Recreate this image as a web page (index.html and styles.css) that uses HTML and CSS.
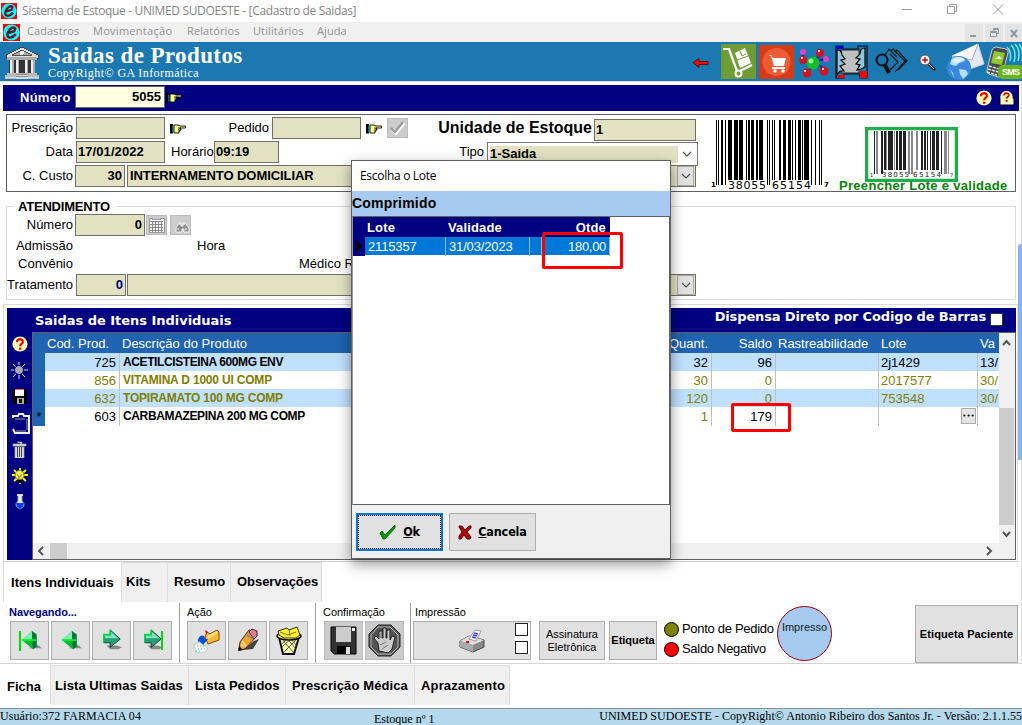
FILE: index.html
```html
<!DOCTYPE html>
<html lang="pt-BR">
<head>
<meta charset="utf-8">
<title>Sistema de Estoque</title>
<link rel="stylesheet" href="styles.css">
</head>
<body>
<svg class="defs" width="0" height="0">
  <defs>
    <symbol id="app" viewBox="0 0 16 16"><rect width="16" height="16" fill="#f00"/><circle cx="8" cy="8" r="7.6" fill="#0ff"/><path d="M4.500 8.700L10.500 6.800C13 3.200 9.500 2 6.500 5C3.200 8.500 3.500 13 7 12.800C9 12.600 10.500 11.500 12 9.500" fill="none" stroke="#601828" stroke-width="2.300"/></symbol>
    <symbol id="hand" viewBox="0 0 16 10"><path d="M0 0h3v9.500H0z" fill="#000"/><path d="M2.500 1.500h1v7h-1z" fill="#0cc"/><path d="M4 1h4l2 1h5.500v2h-5.500v1h1v1h-1v1h-1v2H4z" fill="#ffff90" stroke="#000" stroke-width=".9"/><path d="M8 4h3M8 6h2" stroke="#000" stroke-width=".8"/></symbol>
    <symbol id="help" viewBox="0 0 16 16"><circle cx="8" cy="8" r="7.600" fill="#ffffb8"/><path d="M5 6.200C5 2.200 11 2.400 10.800 5.800C10.600 8 8.200 7.800 8.100 10.200" fill="none" stroke="#e00" stroke-width="2.200"/><rect x="7" y="11.600" width="2.400" height="2.200" fill="#e00"/></symbol>
    <symbol id="chev" viewBox="0 0 10 6"><path d="M1 1l4 4 4-4" fill="none" stroke="#505050" stroke-width="1.200"/></symbol>
    <symbol id="arrow" viewBox="0 0 24 24"><path d="M6 18h11l6 2-4 2H10z" fill="#888"/><path d="M3 6h7V1l11 10-11 9v-5H3z" fill="#2a9d76" stroke="#0a3b34"/><path d="M4 7h7V3l8 7H4z" fill="#7ce6bd"/><path d="M3 15V6h7V1" fill="none" stroke="#0d4" stroke-width="1.500"/></symbol>
    <symbol id="diamond" viewBox="0 0 24 24"><path d="M8 20h15l-5-4z" fill="#888"/><path d="M1 11L12 1l5 4v13l-4 3z" fill="#08b830"/><path d="M1 11L12 1v10z" fill="#7ff0b0"/><path d="M12 1l5 4v13l-4 3z" fill="#087040"/><path d="M1 11h16" stroke="#0e2" stroke-width="2"/></symbol>
  </defs>
</svg>
<div class="window">
  <header class="titlebar">
    <svg class="app-icon" width="16" height="16"><use href="#app"/></svg>
    <span class="title-text">Sistema de Estoque - UNIMED SUDOESTE - [Cadastro de Saidas]</span>
    <svg class="win-controls" width="110" height="22" fill="none" stroke="#999"><path d="M0 9.500h10M45.500 6.500h7v7h-7zM47.500 6.500v-2h7v7h-2M91 4.500l10 10M101 4.500l-10 10"/></svg>
  </header>
  <nav class="menubar">
    <svg class="app-icon" width="17" height="17"><use href="#app"/></svg>
    <span class="menu m1">Cadastros</span><span class="menu m2">Movimentação</span><span class="menu m3">Relatórios</span><span class="menu m4">Utilitários</span><span class="menu m5">Ajuda</span>
    <div class="mdi">
      <span><svg width="18" height="18"><path d="M5 12h6" stroke="#8c99a3" stroke-width="2"/></svg></span>
      <span><svg width="18" height="18" fill="none" stroke="#8c99a3"><path d="M5.500 8.500h6v4h-6zM5 7.500h7M8.500 7v-2.500h5v5h-2M8 5.500h6"/></svg></span>
      <span><svg width="17" height="18"><path d="M6 6l6 7M12 6l-6 7" stroke="#8c99a3" stroke-width="2"/></svg></span>
    </div>
  </nav>

  <section class="banner">
    <svg class="bank" width="34" height="34" viewBox="0 0 34 34" shape-rendering="crispEdges"><path d="M1 9L17 1l16 8v3H1z" fill="#ddd" stroke="#444"/><path d="M7 9l10-5 10 5z" fill="#aaa" stroke="#555"/><circle cx="17" cy="7" r="2" fill="#eee"/><path d="M2 11h30v3H2z" fill="#aaa"/><path d="M4 14h26v14H4z" fill="#343434"/><path d="M5 14h4v13H5zM11 14h3v13h-3zM20 14h3v13h-3zM26 14h4v13h-4z" fill="#eee"/><path d="M7 14h2v13H7zM13 14h1v13h-1zM22 14h1v13h-1zM28 14h2v13h-2z" fill="#aaa"/><path d="M2 27h30v2h2v4H0v-4h2z" fill="#bbb"/><path d="M11 28h12v5H11z" fill="#888"/><path d="M0 31h34M11 29h12M11 32h12" stroke="#ddd"/></svg>
    <div class="banner-text"><h1>Saidas de Produtos</h1><p>CopyRight© GA Informática</p></div>
    <svg class="tools" width="330" height="39" viewBox="0 0 330 39">
      <path d="M1 20.500l6-4v3h9v3H7v3z" fill="#f00" stroke="#500" stroke-width=".8"/>
      <rect x="29" y="2" width="35" height="35" fill="#6f9d35"/><path d="M31 7h6l8 22" fill="none" stroke="#fff" stroke-width="2.200"/><path d="M43 11l10-5 6 15-11 5z" fill="#fff"/><path d="M48 9l2 5 4-2M45 18l11-4" fill="none" stroke="#6f9d35"/><circle cx="46.500" cy="31.500" r="3" fill="none" stroke="#fff" stroke-width="2"/><path d="M48 29l12-6" stroke="#fff" stroke-width="2"/>
      <rect x="67" y="3" width="35" height="34" rx="2" fill="#d53c16"/><circle cx="84.500" cy="20" r="14" fill="#ed5b35"/><path d="M76 13h3l2 3h13l-2 8H82l-3-10zM80 25h13v2H80z" fill="#fff"/><circle cx="83" cy="29" r="1.700" fill="#fff"/><circle cx="91" cy="29" r="1.700" fill="#fff"/>
      <path d="M111 10v8l10 4 8-11M115 31l8-10 13 8M121 20l16-4" fill="none" stroke="#0b2ba0" stroke-width="2.500"/><circle cx="121" cy="21" r="6.500" fill="#12bd2b"/><circle cx="119" cy="19" r="2.500" fill="#8f8"/><circle cx="111" cy="10" r="3" fill="#d4c"/><circle cx="134" cy="17" r="3" fill="#d4c"/><g fill="#d01525"><circle cx="128" cy="11" r="4"/><circle cx="111" cy="18" r="4"/><circle cx="115" cy="31" r="4.500"/><circle cx="132" cy="29" r="4.500"/></g><path d="M126 9h2M109 16h2M112 29h2M130 27h2" stroke="#fcc" stroke-width="2"/>
      <rect x="149" y="8" width="18" height="23" fill="#c0c0c0" stroke="#222"/><path d="M144 4h7v3h15V4h9v32h-7v-4h-16v4h-8z" fill="none" stroke="#111" stroke-width="1.200"/><path d="M144 4h7v3h-7z" fill="#00d"/><path d="M146 33h7v3h-7zM168 29h7v7h-7z" fill="#f00"/><path d="M145 8q4-1 5 5l3 4-4 1 4 4-5 2 4 5-4 0-3 4zM173 6q-5 0-5 6l-4 4 4 1-4 5 4 1-3 5 4-1 4-2z" fill="#8fc5df" stroke="#000" stroke-width="1.200"/>
      <g fill="none" stroke="#111" stroke-width="1.100"><path d="M193 13l4-6 8 8M199 9l2-2 12 12-10 11M203 10l2-2 9 10-10 11M198 12l8 8-8 8M207 10l8 9-9 9"/><circle cx="190" cy="18" r="5.500" stroke-width="2"/><path d="M193 23l4 8" stroke-width="4"/></g>
      <circle cx="233" cy="18" r="5" fill="#fff" stroke="#555"/><path d="M233 15v6M230 18h6" stroke="#d00" stroke-width="1.500"/><path d="M237 22l6 6" stroke="#111" stroke-width="2.500"/><path d="M237 22l5 5" stroke="#ddd"/>
      <path d="M260 14L286 2l6 20-23 8z" fill="#e5e9f4" stroke="#ccd"/><path d="M260 14l20 4 6-16" fill="#f8f8fc" stroke="#aab"/><circle cx="267" cy="26" r="12" fill="#3889df"/><path d="M258 22c2-8 12-9 15-4l-5 2-4 4-4-1zM267 27l7 1 2 4-5 5-3-5zM258 27l3 4 1 5" fill="#b5e1fa"/><ellipse cx="266" cy="18" rx="7" ry="3" fill="#fff" opacity=".5"/>
      <path d="M300 8q1-3 4-3l10 2q3 1 2 4l-6 22q-1 3-4 2l-9-3q-3-1-2-4z" fill="#464c53" stroke="#ccc"/><path d="M302 9l11 2-3 12-11-2z" fill="#8fc92e"/><path d="M303 17l4-3 3 3z" fill="#fff"/><path d="M297 24l10 3M296 27l10 3M295 30l10 3" stroke="#eee" stroke-width="1.500" stroke-dasharray="3 1"/><path d="M315 5q5 5 3 14M319 3q6 6 3 17M323 2q6 6 3 17M327 2q5 6 3 17" fill="none" stroke="#5df1ed" stroke-width="1.500"/><rect x="306" y="23" width="26" height="14" rx="5" fill="#69b51e"/>
      <text x="310" y="33" class="sms" textLength="18">SMS</text>
    </svg>
  </section>

  <main class="content">
    <section class="number-bar">
      <label>Número</label><div class="number-input">5055</div>
      <svg width="16" height="10"><use href="#hand"/></svg>
      <svg class="help-a" width="16" height="16"><use href="#help"/></svg>
      <svg class="help-b" width="16" height="16"><path d="M1 8h14v7H1z" fill="#ffffd0" stroke="#000"/><use href="#help" x="1" width="13" height="14"/></svg>
    </section>

    <section class="request">
      <div class="fields">
        <div class="row">
          <label class="lead">Prescrição</label><div class="box w89"></div>
          <svg class="hand" width="16" height="10"><use href="#hand"/></svg>
          <label class="pedido">Pedido</label><div class="box w89"></div>
          <svg class="hand" width="16" height="10"><use href="#hand"/></svg>
          <div class="sq confirm"><svg width="19" height="18"><path d="M4 10l4 4 8-10" fill="none" stroke="#fff" stroke-width="3.500"/><path d="M3 9l4 4 8-10" fill="none" stroke="#999" stroke-width="2.500"/></svg></div>
          <label class="unit">Unidade de Estoque</label><div class="box w102">1</div>
        </div>
        <div class="row">
          <label class="lead">Data</label><div class="box w89">17/01/2022</div>
          <label class="hour">Horário</label><div class="box w65">09:19</div>
          <label class="type">Tipo</label><div class="select"><span>1-Saida</span><svg width="10" height="6"><use href="#chev"/></svg></div>
        </div>
        <div class="row shift">
          <label class="lead">C. Custo</label><div class="box w50 num">30</div>
          <div class="box wide">INTERNAMENTO DOMICILIAR<i class="drop"><svg width="10" height="6"><use href="#chev"/></svg></i></div>
        </div>
      </div>
      <svg class="barcode" width="118" height="71" viewBox="0 0 118 71" shape-rendering="crispEdges">
        <path d="M5 0h1v65h-1zM7 0h1v65h-1zM10 0h2v65h-2zM14 0h1v65h-1zM17 0h4v60h-4zM23 0h4v60h-4zM28 0h4v60h-4zM35 0h1v60h-1zM37 0h2v60h-2zM40 0h3v60h-3zM45 0h2v60h-2zM48 0h4v60h-4zM56 0h1v65h-1zM58 0h1v65h-1zM61 0h1v60h-1zM63 0h1v60h-1zM68 0h2v60h-2zM72 0h3v60h-3zM77 0h3v60h-3zM81 0h1v60h-1zM84 0h1v60h-1zM87 0h3v60h-3zM91 0h1v60h-1zM93 0h5v60h-5zM100 0h1v65h-1zM104 0h1v65h-1zM108 0h1v65h-1zM110 0h1v65h-1z"/>
        <text x="0" y="67" class="bar-side">1</text><text x="17" y="69" class="bar-num" textLength="38">38055</text><text x="61" y="69" class="bar-num" textLength="39">65154</text><text x="113" y="67" class="bar-side">7</text>
      </svg>
      <div class="mini">
        <svg class="mini-code" width="93" height="55" viewBox="0 0 93 55">
          <rect x="1.500" y="1.500" width="90" height="52" fill="#fff" stroke="#21ad4c" stroke-width="3.500"/>
          <path d="M9 4h1v43h-1zM16 4h2v43h-2zM19 4h2v39h-2zM23 4h5v39h-5zM31 4h2v39h-2zM34 4h3v39h-3zM38 4h3v39h-3zM56 4h2v39h-2zM59 4h2v39h-2zM62 4h1v39h-1zM65 4h1v39h-1zM67 4h3v39h-3zM71 4h3v39h-3zM76 4h1v43h-1z" fill="#222"/><path d="M11 4h2v43h-2zM21 4h1v39h-1zM29 4h1v39h-1zM43 4h2v43h-2zM46 4h2v43h-2zM51 4h2v39h-2zM79 4h3v43h-3zM83 4h1v43h-1z" fill="#888"/>
          <text x="5" y="50" class="mini-side">1</text><text x="17" y="50" class="mini-num" textLength="27">38055</text><text x="48" y="50" class="mini-num" textLength="28">65154</text><text x="85" y="50" class="mini-side">7</text>
        </svg>
        <p>Preencher Lote e validade</p>
      </div>
    </section>

    <section class="care">
      <h2>ATENDIMENTO</h2>
      <div class="row c1 shift"><label class="lead">Número</label><div class="box w70 num">0</div>
        <div class="sq"><svg width="19" height="18" shape-rendering="crispEdges"><path d="M2 2h3v1h8v-1h4v14H2z" fill="#fff" stroke="#999"/><path d="M3 5.500h13M3 8.500h13M3 11.500h13M3 14h13M5.500 5v11M8.500 5v11M11.500 5v11M14.500 5v11" stroke="#888"/></svg></div>
        <div class="sq second"><svg width="19" height="18"><path d="M5 16v-4l3-5h2v3h2v-3h2l4 5v4h-5v-3h-2v3z" fill="#909090" stroke="#fff" stroke-width=".8"/><path d="M8 8h2M12 8h2M6 13h2M14 13h2" stroke="#fff"/></svg></div></div>
      <div class="row c2"><label class="lead">Admissão</label><label class="hora">Hora</label></div>
      <div class="row c3"><label class="lead">Convênio</label><label class="medico">Médico Responsável</label></div>
      <div class="row c4"><label class="lead">Tratamento</label><div class="box w50 num navy">0</div><div class="box wide"><i class="drop"><svg width="10" height="6"><use href="#chev"/></svg></i></div></div>
    </section>

    <section class="items">
      <div class="items-panel">
        <div class="items-head"><h3>Saidas de Itens Individuais</h3><span>Dispensa Direto por Codigo de Barras</span><i class="check"></i></div>
        <div class="items-body">
          <div class="side-tools">
            <svg width="16" height="16"><use href="#help"/></svg>
            <svg width="17" height="17"><path d="M8 0v17M0 8h17M2 2l12 13M14 2L2 15" stroke="#ddd"/><circle cx="8" cy="8" r="4.500" fill="#aaa" stroke="#000080"/></svg>
            <svg width="15" height="15" shape-rendering="crispEdges"><path d="M0 0h15v15H2L0 13z"/><path d="M3 0h9v7H3z" fill="#fff"/><path d="M3 0h9v1H3z" fill="#f55"/><path d="M5 9h7v6H5z" fill="#aaa"/><path d="M7 10h3v4H7z" fill="#111"/></svg>
            <svg class="clip" width="19" height="23" fill="none"><path d="M1 6V4h5l1-2h4l1 2h5v17H3l-2-4" stroke="#eee" stroke-width="2"/><path d="M3 7h10M4 19h10M15 7v11" stroke="#999"/></svg>
            <svg width="15" height="17"><path d="M1 3h13v2H1zM5 1h5v2M3 6h9v11H3z" fill="#ddd" stroke="#aaa" stroke-width=".7"/><path d="M5.500 6v10M7.500 6v10M9.500 6v10" stroke="#444"/></svg>
            <svg width="16" height="16"><path d="M8 0v16M0 7h16M2 2l12 11M14 2L2 13" stroke="#ff0" stroke-width="1.800"/><circle cx="7.500" cy="7" r="4.500" fill="#ff5" stroke="#870"/><path d="M5 6l2 3h1l2-3M7 9v4" fill="none" stroke="#863"/><path d="M6 12h4v3H6z" fill="#000"/></svg>
            <svg width="12" height="16"><path d="M4 1v6q-5 5 2 8 7-3 2-8V1z" fill="#e8eeee" stroke="#999"/><path d="M3 1h6" stroke="#ddd" stroke-width="2"/><path d="M2 9h8l-1 4-3 2-3-2z" fill="#0742f8"/></svg>
          </div>
          <div class="grid-wrap">
            <div class="grid-view">
              <div class="data">
                <div class="gr gh"><b></b><span>Cod. Prod.</span><span>Descrição do Produto</span><span class="r">Quant.</span><span class="r">Saldo</span><span>Rastreabilidade</span><span>Lote</span><span>Va</span></div>
                <div class="gr alt"><b></b><span class="r">725</span><span class="prod">ACETILCISTEINA 600MG ENV</span><span class="r">32</span><span class="r">96</span><span></span><span>2j1429</span><span>13/</span></div>
                <div class="gr olive"><b></b><span class="r">856</span><span class="prod p2">VITAMINA D 1000 UI COMP</span><span class="r">30</span><span class="r">0</span><span></span><span>2017577</span><span>30/</span></div>
                <div class="gr alt olive"><b></b><span class="r">632</span><span class="prod p3">TOPIRAMATO 100 MG COMP</span><span class="r">120</span><span class="r">0</span><span></span><span>753548</span><span>30/</span></div>
                <div class="gr"><b>*</b><span class="r">603</span><span class="prod p4">CARBAMAZEPINA 200 MG COMP</span><span class="r oliv">1</span><span class="r">179</span><span></span><span class="lot"><em>•••</em></span><span></span></div>
              </div>
              <div class="vscroll"><svg width="15" height="75"><path d="M4 12l3.500-4 3.500 4" fill="none" stroke="#555" stroke-width="2"/></svg><i></i><svg width="15" height="18"><path d="M4 7l3.500 4L11 7" fill="none" stroke="#555" stroke-width="2"/></svg></div>
            </div>
            <div class="hscroll"><svg width="17" height="16"><path d="M10 4L6 8l4 4" fill="none" stroke="#555" stroke-width="2"/></svg><i></i><svg class="right" width="17" height="16"><path d="M5 4l4 4-4 4" fill="none" stroke="#555" stroke-width="2"/></svg></div>
          </div>
        </div>
      </div>
    </section>
    <div class="tabs upper"><span class="active t1">Itens Individuais</span><span class="t2">Kits</span><span class="t3">Resumo</span><span class="t4">Observações</span></div>

    <section class="toolbar">
      <div class="group g1"><h4 class="nav-title">Navegando...</h4><div class="buttons">
        <button><svg width="26" height="24"><path d="M3 2v20" stroke="#0d0" stroke-width="2"/><use href="#diamond" x="4" y="1" width="22" height="22"/></svg></button>
        <button><svg width="24" height="24"><use href="#diamond" x="2" y="1" width="22" height="22"/></svg></button>
        <button><svg width="24" height="24"><use href="#arrow" x="1" y="0" width="22" height="22"/></svg></button>
        <button><svg width="24" height="24"><use href="#arrow" x="1" y="0" width="22" height="22"/><path d="M21 2v19" stroke="#0d0" stroke-width="2"/></svg></button>
      </div></div>
      <div class="group g2"><h4>Ação</h4><div class="buttons">
        <button><svg width="28" height="28"><path d="M12 10l2-5 3 2 7-4 2 2v8l-11 4z" fill="#ffb637" stroke="#864400"/><path d="M14 9l10-5v3l-9 5z" fill="#ffe67a"/><path d="M5 16c-1-8 7-10 7-4h3l-5 6-4-4z" fill="#0751d8"/><path d="M1 18l5-3 9 6-3 4-9 1z" fill="#fff" stroke="#bcc"/><path d="M4 19h8M5 22h8M3 24h6" stroke="#1bc6d8" stroke-dasharray="1 2"/><path d="M12 3l3 2-2 2" fill="#d00"/></svg></button>
        <button><svg width="28" height="28"><path d="M9 23l10-1 6-10-5 2z" fill="#444"/><path d="M5 23l1-8L15 3l6 1 2 5-12 13z" fill="#f7a12c" stroke="#422"/><path d="M15 5l3-3 5 2v5l-3 3z" fill="#e37d95" stroke="#422"/><path d="M13 8l6 4" stroke="#888" stroke-width="2"/><path d="M8 14l4 5M7 17l3 3" stroke="#fff5a0" stroke-width="1.500"/><path d="M4 24l1-5 4 4z" fill="#111"/></svg></button>
        <button><svg width="28" height="31"><path d="M4 12l4 17h11l5-17z" fill="#ffffb0" stroke="#111" stroke-width="2"/><path d="M5 12l14 16M10 11l11 13M24 12L8 28M19 11L7 22M14 12l8 9M14 12l-8 8" stroke="#333" stroke-width=".8"/><ellipse cx="14" cy="11" rx="12" ry="4" fill="#ff9" stroke="#111" stroke-width="1.500"/><path d="M4 10L3 6l9-3 2 2 8-3 3 8-4 3H9z" fill="#ffef29" stroke="#333"/><path d="M14 5l1 6M5 7l8 3 8-3" fill="none" stroke="#773"/></svg></button>
      </div></div>
      <div class="group g3"><h4>Confirmação</h4><div class="buttons">
        <button><svg width="27" height="29"><path d="M1 1h25v27H4l-3-3z" fill="#333" stroke="#000"/><path d="M6 1h15v15H6z" fill="#ccc"/><path d="M7 20h14v8H7z" fill="#000"/><path d="M16 21h4v7h-4z" fill="#ddd"/><path d="M22 2h3v3h-3z" fill="#eee"/></svg></button>
        <button><svg width="33" height="33"><path d="M10 1h13l9 9v13l-9 9H10l-9-9V10z" fill="#555" stroke="#222"/><path d="M10 3h12l8 8v12l-7 7H10l-7-7V11z" fill="none" stroke="#bbb"/><path d="M11 27l-1-8-4-5 2-2 3 3V7h3v7h1V4h3v10h1V6h3v10l2-4 3 1-3 12-4 4z" fill="#ccc" stroke="#222"/><path d="M12 21l6-3M14 25l6-4M12 9v5" stroke="#777"/></svg></button>
      </div></div>
      <div class="group g4"><h4>Impressão</h4><button class="print"><svg width="27" height="25"><path d="M1 13l9-5 15 4v7l-11 5L1 19z" fill="#888" stroke="#444"/><path d="M1 13l9-5 15 4-11 5z" fill="#ddd"/><path d="M1 13v6l13 5v-7z" fill="#aaa"/><path d="M10 11l6-9 6 1-5 10z" fill="#fff" stroke="#999"/><path d="M14 7l4 1M15 5l4 1M13 9l4 1" stroke="#33f" stroke-width="1.500"/><path d="M7 14h3" stroke="#e00" stroke-width="2"/></svg><i class="boxes"><i></i><i></i></i></button></div>
      <button class="sign">Assinatura<br>Eletrônica</button>
      <button class="label">Etiqueta</button>
      <div class="legend"><p><i class="dot"></i>Ponto de Pedido</p><p class="neg"><i class="dot red"></i>Saldo Negativo</p></div>
      <div class="printed">Impresso</div>
      <button class="patient">Etiqueta Paciente</button>
    </section>
  </main>
  <div class="tabs lower"><span class="active b1">Ficha</span><span class="b2">Lista Ultimas Saidas</span><span class="b3">Lista Pedidos</span><span class="b4">Prescrição Médica</span><span class="b5">Aprazamento</span></div>
  <footer class="status"><span class="user">Usuário:372 FARMACIA 04</span><span class="stock">Estoque nº 1</span><span class="version">UNIMED SUDOESTE - CopyRight© Antonio Ribeiro dos Santos Jr. - Versão: 2.1.1.55</span></footer>

  <i class="edge"></i>
  <i class="mark balance"></i>
  <section class="dialog">
    <div class="dialog-title">Escolha o Lote</div>
    <div class="dialog-sub">Comprimido</div>
    <div class="lots">
      <div class="lr lh"><b></b><span>Lote</span><span>Validade</span><span></span><span class="r">Qtde</span></div>
      <div class="lr ld"><b><svg width="8" height="12"><path d="M1 0l6 6-6 6z"/></svg></b><span>2115357</span><span>31/03/2023</span><span></span><span class="r">180,00</span></div>
    </div>
    <div class="actions">
      <button class="ok"><svg width="18" height="16"><path d="M1 9l2-2 3 4L16 1v3L6 15H4z" fill="#00a000" stroke="#004800" stroke-width=".8"/></svg><span><u>O</u>k</span></button>
      <button class="cancel"><svg width="14" height="15"><path d="M1 1h3l3 4 4-4h2v2L9 7l4 5-1 2h-3l-3-4-3 4H1v-3l3-4-3-5z" fill="#a50b0b" stroke="#700"/></svg><span><u>C</u>ancela</span></button>
    </div>
  </section>
  <i class="mark quantity"></i>
</div>
</body>
</html>
```
FILE: styles.css
```css
* { box-sizing: border-box; }
body { margin: 0; font: 13px/15px "Liberation Sans", Arial, sans-serif; color: #000; background: #fff; }
h1, h2, h3, h4, p { margin: 0; }
i { font-style: normal; }
svg { display: block; flex: none; }
button { font: inherit; color: #000; padding: 0; margin: 0; background: #e1e1e1; border: 1px solid #adadad; display: flex; align-items: center; justify-content: center; flex: none; }
.defs { position: absolute; }
.window { position: relative; width: 1022px; height: 725px; overflow: hidden; display: flex; flex-direction: column; white-space: nowrap; }

.titlebar { height: 22px; display: flex; align-items: center; padding-left: 1px; color: #858585; font: 12px/20px "Open Sans", sans-serif; flex: none; }
.title-text { margin-left: 5px; letter-spacing: -.35px; }
.win-controls { margin-left: auto; margin-right: 10px; }
.menubar { height: 20px; background: #f0f0f0; display: flex; align-items: center; padding-left: 3px; color: #909090; font: 11px/16px "Open Sans", sans-serif; flex: none; }
.menu { letter-spacing: .1px; flex: none; padding-bottom: 2px; }
.m1 { width: 66px; margin-left: 7px; }
.m2 { width: 94px; }
.m3 { width: 66px; }
.m4 { width: 64px; }
.m2 { letter-spacing: .28px; }
.mdi { margin-left: auto; display: flex; gap: 2px; height: 18px; margin-top: 1px; }
.mdi span { background: #e4e4e4; }

.banner { height: 39px; background: #1c78b0; display: flex; color: #fff; flex: none; }
.bank { margin: 4px 0 0 5px; }
.banner-text { margin-left: 9px; font-family: "Liberation Serif", serif; width: 250px; }
.banner-text h1 { font-size: 23px; line-height: 25px; margin-top: 1px; letter-spacing: .4px; }
.banner-text p { font-size: 12px; line-height: 12px; margin-top: -1px; letter-spacing: .42px; }
.tools { margin-left: auto; }
.sms { font: bold 9px "Liberation Sans", sans-serif; fill: #fff; }

.content { height: 583px; padding: 3px 3px 0; border-top: 1px solid #ddd; border-right: 1px solid #ddd; border-bottom: 1px solid #d4d4d4; flex: none; }
.number-bar { height: 26px; background: #000080; color: #fff; display: flex; align-items: center; margin-right: -1px; font-weight: bold; }
.number-bar label { width: 72px; padding: 0 0 1px 17px; letter-spacing: .25px; }
.number-input { width: 90px; height: 22px; background: #ffffe1; border: 1px solid #666; color: #000; text-align: right; padding: 2px 3px 0; margin: -2px 1px 0 0; }
.help-a { margin-left: auto; margin-right: 7px; }
.help-b { margin-right: 4px; }

.request { display: flex; height: 78px; border: 1px solid #606060; margin: 3px 2px 0 3px; padding-top: 2px; }
.fields { width: 704px; flex: none; }
.row { display: flex; height: 24px; align-items: flex-start; }
.row label { padding-top: 3px; flex: none; }
.lead { width: 66px; text-align: right; margin-right: 3px; }
.shift .lead { margin-right: 2px; }
.box { height: 22px; background: #e2e2c3; border: 1px solid #707068; font-weight: bold; padding: 2px 1px 0; flex: none; }
.w89 { width: 89px; letter-spacing: .08px; }
.w102 { width: 102px; margin-top: 2px; }
.w65 { width: 65px; }
.w50 { width: 50px; margin-right: 2px; }
.c4 .w50 { margin-right: 1px; }
.w70 { width: 70px; margin-right: 1px; }
.num { text-align: right; padding-right: 2px; }
.wide { width: 569px; display: flex; padding-left: 2px; letter-spacing: -.08px; }
.drop { width: 17px; height: 20px; background: #e1e1e1; border: 1px solid #aaa; display: flex; align-items: center; justify-content: center; margin: -2px 0 0 auto; }
.navy { color: #000080; }
.hand { margin: 7px 0 0 5px; }
.pedido { width: 83px; text-align: right; margin-right: 3px; }
.sq { width: 21px; height: 20px; border: 1px solid #bbb; background: #ccc; margin: 1px 0 0; flex: none; }
.confirm { margin-left: 5px; }
.second { margin-left: 3px; }
.row .unit { width: 186px; text-align: right; font: bold 16px/18px "Liberation Sans", sans-serif; padding-top: 2px; padding-right: 2px; }
.hour { width: 49px; padding-left: 6px; }
.type { width: 208px; text-align: right; padding-right: 3px; }
.select { width: 211px; height: 24px; border: 1px solid #777; display: flex; align-items: center; font-weight: bold; padding-left: 2px; margin-top: 1px; background: #fff; }
.select span { width: 188px; height: 17px; background: #e2e2c3; margin-right: 4px; line-height: 15px; }
.barcode { margin: 3px 0 0 0; }
.bar-num { font: 11px "DejaVu Sans", sans-serif; }
.bar-side { font: bold 7px "DejaVu Sans", sans-serif; }
.mini { padding: 10px 0 0 10px; color: #068306; width: 185px; flex: none; }
.mini-code { margin-left: 26px; }
.mini-num { font: 7px "DejaVu Sans", sans-serif; fill: #111; }
.mini-side { font: 5px "DejaVu Sans", sans-serif; fill: #111; }
.mini p { font-weight: bold; letter-spacing: .3px; margin-top: -2px; line-height: 12px; }

.care { height: 94px; border: 1px solid #dcdcdc; margin: 14px 2px 0 3px; }
.care h2 { width: 103px; font-size: 13px; line-height: 15px; margin: -8px 0 0 7px; background: #fff; padding-left: 4px; letter-spacing: -.2px; }
.c1 { height: 24px; }
.c2 { height: 18px; }
.row.c2 label, .row.c3 label { padding-top: 0; }
.c3 { height: 17px; }
.c4 { padding-top: 1px; }
.hora { margin-left: 121px; }
.medico { margin-left: 223px; }

.items { height: 258px; border: 1px solid #dcdcdc; border-bottom-color: #ccc; padding: 3px 1px 0 3px; margin-top: 4px; }
.items-panel { height: 252px; background: #000080; display: flex; flex-direction: column; }
.items-head { height: 24px; color: #fff; display: flex; font: bold 13px/20px "DejaVu Sans", Verdana, sans-serif; }
.items-head h3 { font: inherit; padding: 3px 0 0 28px; letter-spacing: -.03px; }
.items-head span { margin-left: auto; line-height: 18px; margin-right: 4px; letter-spacing: -.14px; }
.check { width: 13px; height: 13px; background: #fff; border: 1px solid #333; margin: 5px 13px 0 0; }
.items-body { height: 228px; display: flex; }
.side-tools { width: 25px; padding-top: 4px; display: flex; flex-direction: column; align-items: center; gap: 10px; }
.clip { margin: -2px -4px -4px 0; }
.grid-wrap { flex: 1; border: 1px solid #606060; background: #fff; min-width: 0; }
.grid-view { height: 210px; display: flex; }
.data { flex: 1; min-width: 0; overflow: hidden; }
.gr { display: grid; grid-template-columns: 12px 75px 480px 112px 64px 103px 99px 25px; height: 18px; line-height: 19px; }
.gr b { background: #2063b0; text-align: center; font-weight: normal; }
.gr span { border-right: 1px solid #c0c0c0; padding-left: 2px; overflow: hidden; }
.gr .r { text-align: right; padding-right: 3px; }
.gr .prod { font-weight: bold; font-size: 12px; letter-spacing: -.4px; border-right: 0; padding-left: 3px; }
.gr .p2 { letter-spacing: -.19px; }
.gr .p3 { letter-spacing: -.22px; }
.gr .p4 { letter-spacing: -.36px; }
.gh { height: 20px; background: #2063b0; color: #fff; line-height: 21px; }
.gh span { border: 0; }
.gh .r { padding-right: 4px; }
.alt { background: #c0e0ff; }
.olive, .oliv { color: #808000; }
.lot { display: flex; justify-content: flex-end; }
.lot em { width: 15px; height: 16px; border: 1px solid #aaa; background: #e4e4e4; margin: 1px 1px 0 0; font: 7px/14px "DejaVu Sans", sans-serif; text-align: center; }
.vscroll { width: 16px; background: #f0f0f0; display: flex; flex-direction: column; }
.vscroll i { width: 15px; height: 117px; background: #cdcdcd; }
.hscroll { height: 16px; background: #f0f0f0; display: flex; }
.hscroll i { width: 17px; background: #cdcdcd; }
.right { margin-left: auto; margin-right: 16px; }

.tabs { display: flex; font-weight: bold; flex: none; }
.tabs span { background: #f0f0f0; border: solid #ddd; border-width: 1px 1px 0 0; flex: none; }
.tabs .active { background: #fff; border-top: 0; }
.upper { height: 40px; }
.upper span { height: 40px; padding: 11px 0 0 4px; }
.upper .t1 { width: 119px; padding: 13px 0 0 7px; border-left: 1px solid #ddd; letter-spacing: .05px; }
.t2 { width: 46px; }
.upper .t3 { width: 63px; padding-left: 6px; }
.upper .t4 { width: 91px; padding-left: 6px; letter-spacing: -.05px; }

.toolbar { height: 62px; display: flex; margin-right: -3px; font-size: 11px; line-height: 13px; }
.toolbar h4 { font: 11px/13px "Liberation Sans", sans-serif; margin-bottom: 2px; letter-spacing: -.05px; }
.toolbar .nav-title { font-weight: bold; color: #000080; margin-left: -1px; }
.group { height: 60px; padding-top: 3px; border-right: 1px solid #a0a0a0; margin-top: 1px; flex: none; }
.buttons { display: flex; gap: 2px; }
.buttons button { width: 39px; height: 39px; }
.g1 { width: 170px; margin-left: 7px; }
.g2 { width: 136px; padding-left: 7px; }
.g3 { width: 95px; padding-left: 8px; }
.g3 h4 { margin-left: -1px; }
.g3 button { background: #ccc; border-color: #bbb; }
.g4 { width: 120px; border: 0; padding-left: 2px; }
.g4 h4 { padding-left: 2px; }
.print { width: 118px; height: 39px; justify-content: flex-start; padding-left: 45px; }
.boxes { display: flex; flex-direction: column; justify-content: space-between; background: #fff; width: 15px; height: 31px; margin: -5px 0 0 auto; }
.boxes i { width: 13px; height: 13px; border: 1px solid #222; background: #fff; }
.sign { width: 66px; height: 39px; margin: 19px 0 0 8px; }
.label { width: 48px; height: 39px; margin: 19px 0 0 4px; font-weight: bold; }
.legend { width: 117px; margin: 17px 0 0 7px; font-size: 13px; letter-spacing: -.3px; flex: none; }
.legend p { height: 20px; display: flex; align-items: center; line-height: 16px; }
.dot { width: 15px; height: 15px; border: 1px solid #000; border-radius: 50%; background: #808000; margin-right: 3px; }
.red { background: #f00; }
.printed { width: 55px; height: 55px; background: #a6caf0; border: 1px solid #a00000; border-radius: 50%; text-align: center; line-height: 41px; margin: 4px 0 0 -4px; color: #122; flex: none; }
.patient { width: 103px; height: 58px; margin: 3px 3px 0 auto; font-weight: bold; letter-spacing: .1px; }

.lower { height: 44px; }
.lower span { height: 40px; padding: 12px 0 0 4px; margin-top: 1px; }
.lower .b1 { width: 51px; padding: 15px 0 0 7px; margin: 0; }
.lower .b2 { width: 138px; letter-spacing: .07px; }
.lower .b3 { width: 97px; padding-left: 6px; }
.lower .b4 { width: 129px; padding-left: 6px; letter-spacing: .1px; }
.lower .b5 { width: 95px; padding-left: 6px; letter-spacing: .15px; }
.status { height: 17px; background: #b4d9ec; border-top: 1px solid #909090; display: flex; font: 12px/15px "Liberation Serif", serif; flex: none; }
.user { width: 374px; letter-spacing: .08px; }
.stock { padding-top: 3px; line-height: 14px; }
.version { margin-left: auto; letter-spacing: .02px; }

.edge { position: absolute; left: 1018px; top: 244px; width: 5px; height: 216px; background: #8ab4ea; border-top-left-radius: 3px; }
.mark { position: absolute; border: 3px solid #f00; border-radius: 2px; }
.balance { left: 731px; top: 403px; width: 60px; height: 29px; }
.quantity { left: 542px; top: 232px; width: 81px; height: 37px; }
.dialog { position: absolute; left: 351px; top: 160px; width: 320px; height: 399px; border: 1px solid #606060; background: #f0f0f0; box-shadow: 0 5px 13px rgba(0,0,0,.42); display: flex; flex-direction: column; }
.dialog-title { height: 30px; background: #fff; padding: 6px 8px; font: 12px/17px "Open Sans", sans-serif; letter-spacing: -.3px; flex: none; }
.dialog-sub { height: 25px; background: #a6caf0; font-weight: bold; font-size: 14px; line-height: 24px; letter-spacing: .2px; flex: none; }
.lots { height: 289px; border: 1px solid #606060; background: #fff; border-left-color: #999; flex: none; }
.lr { width: 257px; display: grid; grid-template-columns: 12px 81px 84px 12px 68px; height: 18px; background: #0078d7; color: #fff; line-height: 19px; }
.lr span { padding-left: 3px; border-right: 1px solid #90b8dd; letter-spacing: -.15px; }
.lr b { background: #000080; padding: 3px 2px; }
.lr .r { text-align: right; padding-right: 3px; letter-spacing: -.3px; }
.lh { height: 20px; background: #000080; font-weight: bold; line-height: 21px; }
.lh span, .lh .r { border: 0; padding-left: 2px; letter-spacing: .15px; }
.lh .r { padding-right: 4px; }
.actions { display: flex; padding: 8px 4px 0; gap: 6px; font: bold 12.5px/16px "DejaVu Sans Condensed", "DejaVu Sans", sans-serif; letter-spacing: -.15px; }
.actions button { width: 87px; height: 38px; gap: 6px; letter-spacing: inherit; }
.actions .ok { border: 2px solid #0078d7; outline: 1px dotted #000; outline-offset: -3px; }
```
